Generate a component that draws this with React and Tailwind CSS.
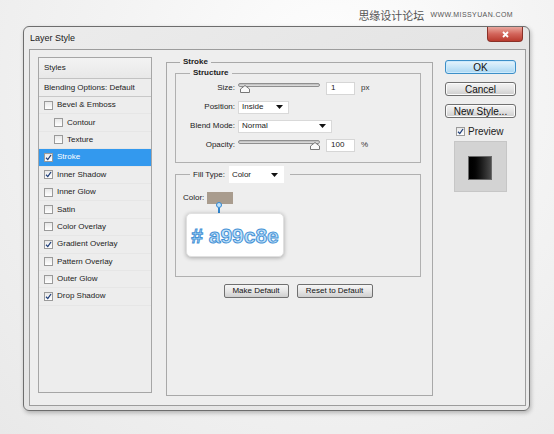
import React from "react";

const font = { fontFamily: '"Liberation Sans", Arial, sans-serif' };

const styles = [
  { label: "Bevel & Emboss", checked: false },
  { label: "Contour", checked: false, indent: true },
  { label: "Texture", checked: false, indent: true },
  { label: "Stroke", checked: true, active: true },
  { label: "Inner Shadow", checked: true },
  { label: "Inner Glow", checked: false },
  { label: "Satin", checked: false },
  { label: "Color Overlay", checked: false },
  { label: "Gradient Overlay", checked: true },
  { label: "Pattern Overlay", checked: false },
  { label: "Outer Glow", checked: false },
  { label: "Drop Shadow", checked: true },
];

function Check({ checked }) {
  return (
    <span className="w-[9px] h-[9px] border border-[#9a9a9a] bg-gradient-to-b from-[#e8e8e8] to-white flex items-center justify-center shrink-0">
      {checked && (
        <svg width="7" height="7" viewBox="0 0 7 7">
          <path d="M1 3.8 L2.8 5.6 L6 1" fill="none" stroke="#1f3f7a" strokeWidth="1.3" />
        </svg>
      )}
    </span>
  );
}

function Arrow() {
  return (
    <svg width="7" height="4" viewBox="0 0 7 4">
      <path d="M0 0 H7 L3.5 4 Z" fill="#111" />
    </svg>
  );
}

function Slider({ pos }) {
  return (
    <div className="relative w-[82px] h-[14px]">
      <div className="absolute left-0 right-0 top-[2px] h-[4px] rounded-[2px] border border-[#8f8f8f] bg-gradient-to-b from-[#b9b9b9] to-[#e2e2e2]" />
      <svg
        width="10"
        height="8"
        viewBox="0 0 10 8"
        className={"absolute top-[4px] " + (pos === "right" ? "right-0" : "left-[2px]")}
      >
        <path d="M0.5 7.5 V4 L5 0.5 L9.5 4 V7.5 Z" fill="#fafafa" stroke="#777" />
      </svg>
    </div>
  );
}

function Row({ label, children }) {
  return (
    <div className="flex items-center h-[14px]">
      <span className="w-[59px] text-right text-[8px] text-[#222]">{label}</span>
      <div className="ml-[3px] flex items-center">{children}</div>
    </div>
  );
}

function Field({ value, unit }) {
  return (
    <>
      <div className="ml-[6px] w-[29px] h-[13px] bg-white border border-[#d6d6d6] text-[8px] pl-[4px] flex items-center">
        {value}
      </div>
      <span className="ml-[6px] text-[8px] text-[#333]">{unit}</span>
    </>
  );
}

function Select({ value, width }) {
  return (
    <div
      className={"h-[13px] bg-white border border-[#d9d9d9] flex items-center justify-between pl-[3px] pr-[5px] text-[8px] " + width}
    >
      <span>{value}</span>
      <Arrow />
    </div>
  );
}

function GrayButton({ children, className = "" }) {
  return (
    <div
      className={
        "h-[14px] border border-[#707070] rounded-[2px] bg-gradient-to-b from-[#f6f6f6] via-[#e6e6e6] to-[#cfcfcf] flex items-center justify-center text-[8px] text-[#111] " +
        className
      }
    >
      {children}
    </div>
  );
}

function BigButton({ children, primary }) {
  return (
    <div
      className={
        "w-[71px] h-[14px] rounded-[3px] border flex items-center justify-center text-[10px] text-[#111] " +
        (primary
          ? "border-[#3c8fc8] bg-gradient-to-b from-[#e6f4fc] via-[#c8e6f8] to-[#a9d6f2] shadow-[inset_0_0_0_1px_#cdeafc]"
          : "border-[#707070] bg-gradient-to-b from-[#f4f4f4] via-[#e4e4e4] to-[#cdcdcd] shadow-[inset_0_0_0_1px_#fbfbfb]")
      }
    >
      {children}
    </div>
  );
}

export default function App() {
  return (
    <div
      className="w-[554px] h-[434px] overflow-hidden bg-[radial-gradient(ellipse_at_60%_20%,#ffffff_0%,#f4f4f4_45%,#e9e9e9_100%)] text-[#222]"
      style={font}
    >
      {/* watermark */}
      <div className="h-[26px] flex justify-end items-start pt-[8px] pr-[41px] gap-[6px] text-[#555]">
        <span
          className="text-[11px] leading-[14px]"
          style={{ fontFamily: '"Noto Sans CJK SC", sans-serif' }}
        >
          思缘设计论坛
        </span>
        <span className="text-[7px] leading-[14px] tracking-[0.4px] uppercase">www.missyuan.com</span>
      </div>

      {/* window */}
      <div className="ml-[23px] w-[507px] h-[385px] border border-[#6d6d6d] rounded-[6px] bg-gradient-to-br from-[#ececec] via-[#e4e4e4] to-[#eaeaea] shadow-[1px_2px_4px_rgba(0,0,0,0.25)] flex flex-col">
        <div className="h-[22px] flex justify-between items-start">
          <span className="ml-[6px] mt-[5px] text-[9px] text-[#1a1a1a]">Layer Style</span>
          <div className="mr-[6px] w-[36px] h-[15px] rounded-b-[4px] border border-t-0 border-[#8a3128] bg-gradient-to-b from-[#e9a79e] via-[#d2645a] to-[#b93a2e] flex items-center justify-center">
            <svg width="7" height="7" viewBox="0 0 7 7">
              <path d="M1 1 L6 6 M6 1 L1 6" stroke="#fff" strokeWidth="1.8" />
            </svg>
          </div>
        </div>

        <div className="ml-[5px] mr-[3px] mb-[4px] flex-1 border border-[#9c9c9c] bg-[#eeeeee] flex pl-[8px] pt-[7px]">
          {/* left list */}
          <div className="w-[114px] h-[336px] border border-[#a6a6a6] bg-[#ededed] flex flex-col text-[8px]">
            <div className="h-[21px] border-b border-[#c2c2c2] bg-gradient-to-b from-[#f3f3f3] to-[#e8e8e8] flex items-center pl-[5px]">
              Styles
            </div>
            <div className="h-[18px] border-b border-[#c8c8c8] flex items-center pl-[5px]">
              Blending Options: Default
            </div>
            {styles.map((s) => (
              <div
                key={s.label}
                className={
                  "h-[17.4px] flex items-center gap-[4px] border-b border-[#e6e6e6] " +
                  (s.indent ? "pl-[15px] " : "pl-[5px] ") +
                  (s.active ? "bg-[#3399ee] text-white" : "")
                }
              >
                <Check checked={s.checked} />
                <span>{s.label}</span>
              </div>
            ))}
          </div>

          {/* middle */}
          <fieldset className="ml-[14px] w-[267px] h-[339px] border border-[#a8a8a8] pl-[8px] pr-[11px] flex flex-col">
            <legend className="ml-[5px] px-[3px] text-[8px] font-bold leading-[10px]">Stroke</legend>

            <fieldset className="mt-[1px] h-[95px] border border-[#b0b0b0] pt-[3px] flex flex-col gap-[5px]">
              <legend className="ml-[14px] px-[3px] text-[8px] font-bold leading-[10px]">Structure</legend>
              <Row label="Size:">
                <Slider pos="left" />
                <Field value="1" unit="px" />
              </Row>
              <Row label="Position:">
                <Select value="Inside" width="w-[51px]" />
              </Row>
              <Row label="Blend Mode:">
                <Select value="Normal" width="w-[94px]" />
              </Row>
              <Row label="Opacity:">
                <Slider pos="right" />
                <Field value="100" unit="%" />
              </Row>
            </fieldset>

            <fieldset className="mt-[3px] h-[111px] border border-[#b0b0b0] pl-[7px] flex flex-col">
              <legend className="ml-[7px] pl-[3px] pr-0">
                <span className="flex items-center text-[8px]">
                  <span>Fill Type:</span>
                  <span className="ml-[4px] w-[55px] h-[17px] bg-white flex items-center justify-between pl-[3px] pr-[6px]">
                    <span>Color</span>
                    <Arrow />
                  </span>
                  <span className="w-[6px]" />
                </span>
              </legend>
              <div className="mt-[9px] flex items-center">
                <span className="text-[8px]">Color:</span>
                <span className="ml-[3px] w-[26px] h-[12px] bg-[#a99c8e]" />
              </div>
              <div className="ml-[32px] h-[9px] flex flex-col items-center w-[8px]">
                <span className="w-[6px] h-[6px] rounded-full border-[1.5px] border-[#2f86d2] bg-[#bfe0f8] -mt-[2px]" />
                <span className="w-[2px] h-[5px] bg-[#2f86d2]" />
              </div>
              <div className="ml-[3px] w-[98px] h-[44px] rounded-[5px] bg-white border border-[#e0e0e0] shadow-[0_1px_4px_rgba(0,0,0,0.3)] flex items-center justify-center">
                <span className="text-[21px] font-bold text-[#c2e2fa] [-webkit-text-stroke:1px_#4592d6] leading-none">
                  # a99c8e
                </span>
              </div>
            </fieldset>

            <div className="mt-[7px] flex justify-center gap-[8px]">
              <GrayButton className="w-[65px]">Make Default</GrayButton>
              <GrayButton className="w-[76px]">Reset to Default</GrayButton>
            </div>
          </fieldset>

          {/* right */}
          <div className="ml-[12px] mt-[3px] flex flex-col">
            <BigButton primary>OK</BigButton>
            <div className="mt-[8px]">
              <BigButton>Cancel</BigButton>
            </div>
            <div className="mt-[8px]">
              <BigButton>New Style...</BigButton>
            </div>
            <div className="mt-[8px] ml-[11px] h-[11px] flex items-center gap-[3px] text-[10px]">
              <Check checked />
              <span>Preview</span>
            </div>
            <div className="mt-[4px] ml-[9px] w-[53px] h-[51px] bg-[#d3d3d3] border border-[#c6c6c6] pt-[14px] pl-[13px]">
              <div className="w-[24px] h-[24px] bg-gradient-to-r from-black via-[#151515] to-[#4a4a4a] border border-[#6a6a6a]" />
            </div>
          </div>
        </div>
      </div>
    </div>
  );
}
